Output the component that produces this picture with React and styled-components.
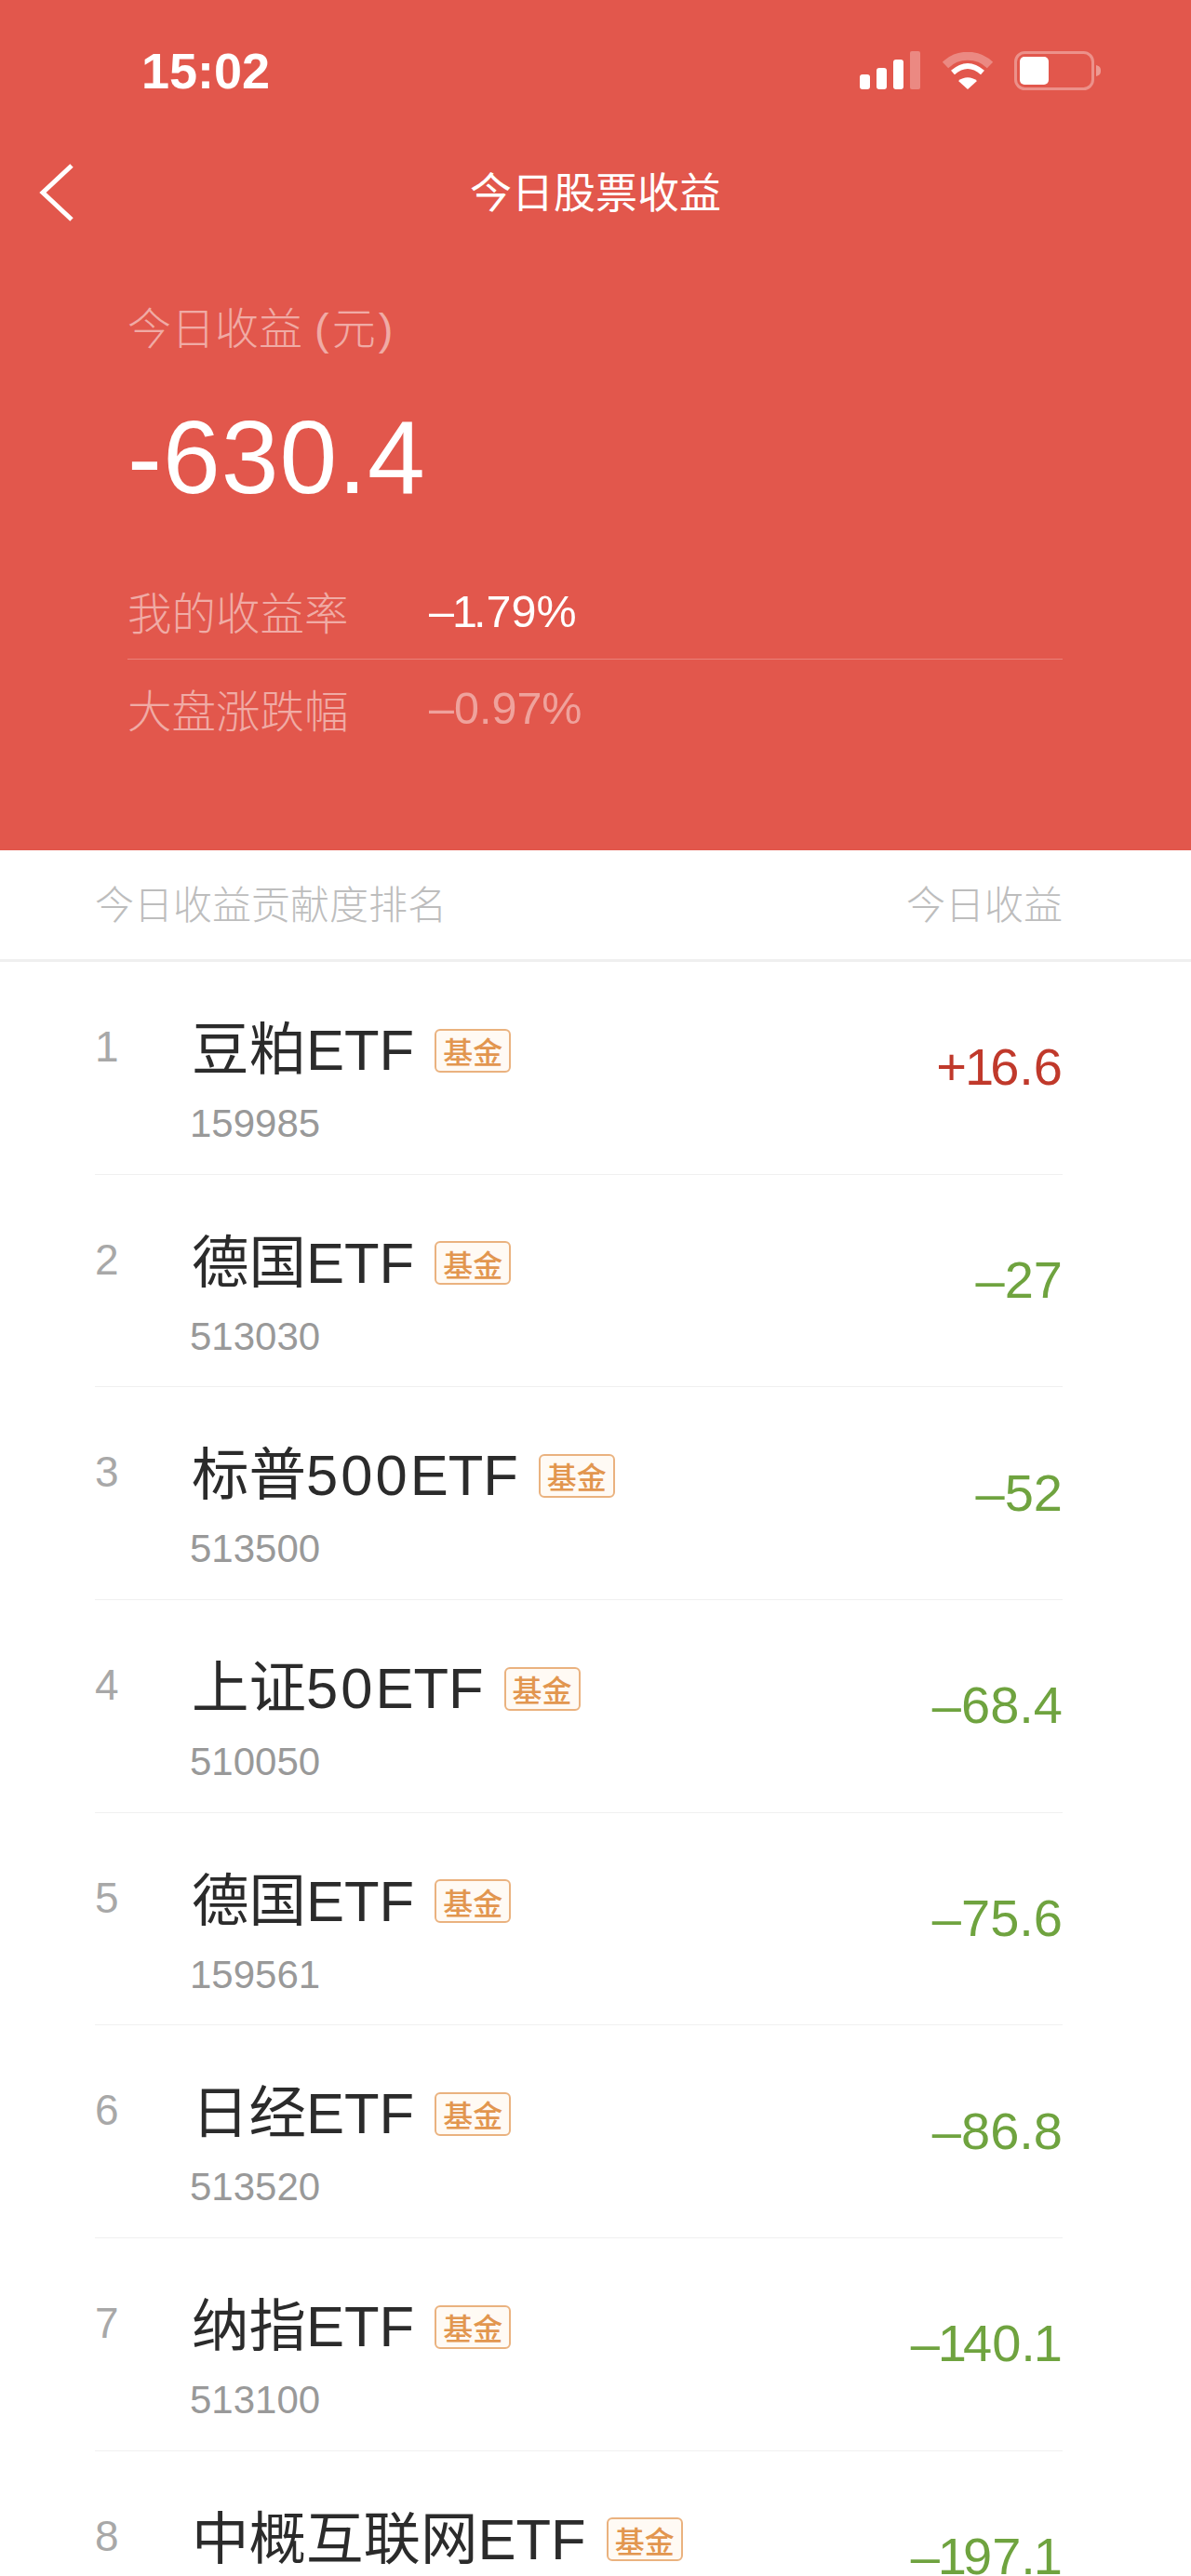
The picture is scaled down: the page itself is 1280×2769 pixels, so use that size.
import React from 'react';
import styled, { createGlobalStyle } from 'styled-components';

const stocks = [
  { rank: 1, name: '豆粕ETF', code: '159985', value: '+16.6', up: true },
  { rank: 2, name: '德国ETF', code: '513030', value: '–27' },
  { rank: 3, name: '标普500ETF', code: '513500', value: '–52' },
  { rank: 4, name: '上证50ETF', code: '510050', value: '–68.4' },
  { rank: 5, name: '德国ETF', code: '159561', value: '–75.6' },
  { rank: 6, name: '日经ETF', code: '513520', value: '–86.8' },
  { rank: 7, name: '纳指ETF', code: '513100', value: '–140.1' },
  { rank: 8, name: '中概互联网ETF', value: '–197.1' },
];

// the screenshot's font has a much narrower "1" than Liberation Sans
function figures(text) {
  const parts = text.split(/(1)/);
  return parts.map((part, i) =>
    part === '1' ? (
      <NarrowOne key={i} $tail={i === parts.length - 2 && parts[i + 1] === ''}>
        1
      </NarrowOne>
    ) : (
      part
    )
  );
}

function nameParts(name) {
  return name.split(/(\d+)/).map((part, i) => (/\d/.test(part) ? <NameDigits key={i}>{part}</NameDigits> : part));
}

function StatusIcons() {
  return (
    <StatusGroup>
      <svg width="66" height="42" viewBox="0 0 66 42" fill="#fff">
        <rect x="0" y="25" width="11" height="16" rx="3" />
        <rect x="18" y="18" width="11" height="23" rx="3" />
        <rect x="36" y="9" width="11" height="32" rx="3" />
        <rect x="54" y="0" width="11" height="41" rx="2" opacity="0.3" />
      </svg>
      <svg width="56" height="40" viewBox="0 0 56 40" fill="none" stroke="#fff">
        <path d="M4 14 C17 1 39 1 52 14" strokeWidth="9" opacity="0.3" />
        <path d="M12 22 Q28 8 44 22" strokeWidth="6" />
        <path d="M18 31 L28 40 L38 31 C32 26 24 26 18 31 Z" fill="#fff" stroke="none" />
      </svg>
      <svg width="94" height="42" viewBox="0 0 94 42">
        <rect x="1.5" y="1.5" width="83" height="39" rx="10" fill="none" stroke="#fff" strokeWidth="3" opacity="0.35" />
        <rect x="6" y="6" width="31" height="30" rx="5" fill="#fff" />
        <path d="M88 15 C92 16 93 18 93 21 C93 24 92 26 88 27 Z" fill="#fff" opacity="0.4" />
      </svg>
    </StatusGroup>
  );
}

function App() {
  return (
    <>
      <GlobalStyle />
      <Page>
        <Header>
          <StatusBar>
            <Clock>15:02</Clock>
            <StatusIcons />
          </StatusBar>
          <Nav>
            <BackIcon width="38" height="62" viewBox="0 0 38 62" fill="none" stroke="#fff" strokeWidth="5">
              <path d="M35 2 L4 31 L35 60" />
            </BackIcon>
            <NavTitle>今日股票收益</NavTitle>
          </Nav>
          <Summary>
            <SummaryLabel>今日收益 <Unit>(元)</Unit></SummaryLabel>
            <Amount>-630.4</Amount>
            <Stats>
              <StatRow $line>
                <StatName>我的收益率</StatName>
                <StatValue>{figures('–1.79%')}</StatValue>
              </StatRow>
              <StatRow>
                <StatName>大盘涨跌幅</StatName>
                <StatValue $dim>{figures('–0.97%')}</StatValue>
              </StatRow>
            </Stats>
          </Summary>
        </Header>
        <ListHead>
          <span>今日收益贡献度排名</span>
          <span>今日收益</span>
        </ListHead>
        <List>
          {stocks.map(stock => (
            <Row key={stock.rank}>
              <Rank>{stock.rank}</Rank>
              <Info>
                <NameLine>
                  <Name>{nameParts(stock.name)}</Name>
                  <Tag>基金</Tag>
                </NameLine>
                {stock.code && <Code>{stock.code}</Code>}
              </Info>
              <Value $up={stock.up}>{figures(stock.value)}</Value>
            </Row>
          ))}
        </List>
      </Page>
    </>
  );
}

const GlobalStyle = createGlobalStyle`
  html, body {
    margin: 0;
    padding: 0;
    background: #fff;
    font-family: "Liberation Sans", "Noto Sans CJK SC", sans-serif;
  }
`;

const Page = styled.div`
  width: 1280px;
  height: 2769px;
  overflow: hidden;
  background: #fff;
`;

const Header = styled.header`
  height: 914px;
  background: #e2574c;
  color: #fff;
`;

const StatusBar = styled.div`
  display: flex;
  justify-content: space-between;
  align-items: center;
  height: 152px;
  padding: 0 96px 0 152px;
`;

const Clock = styled.span`
  font-size: 54px;
  font-weight: 700;
`;

const StatusGroup = styled.div`
  display: flex;
  align-items: center;
  gap: 22px;
`;

const Nav = styled.nav`
  position: relative;
  display: flex;
  justify-content: center;
  align-items: center;
  height: 110px;
`;

const BackIcon = styled.svg`
  position: absolute;
  left: 42px;
  top: 24px;
`;

const NavTitle = styled.h1`
  margin: -6px 0 0;
  font-size: 45px;
  font-weight: 400;
`;

const Summary = styled.section`
  padding: 62px 138px 0 137px;
`;

const SummaryLabel = styled.div`
  font-size: 47px;
  line-height: 60px;
  font-weight: 300;
  color: rgba(255, 255, 255, 0.5);
`;

const Unit = styled.span`
  letter-spacing: 3px;
`;

const Amount = styled.div`
  margin-top: 48px;
  font-size: 111px;
  line-height: 120px;
  letter-spacing: 1px;
`;

const Stats = styled.div`
  margin-top: 53px;
`;

const StatRow = styled.div`
  display: flex;
  align-items: center;
  box-sizing: border-box;
  height: 104px;
  border-bottom: ${props => (props.$line ? '1px solid rgba(255, 255, 255, 0.25)' : 'none')};
`;

const StatName = styled.span`
  width: 324px;
  font-size: 47.5px;
  font-weight: 300;
  color: rgba(255, 255, 255, 0.5);
`;

const StatValue = styled.span`
  font-size: 48.5px;
  color: ${props => (props.$dim ? 'rgba(255, 255, 255, 0.45)' : '#fff')};
`;

const NarrowOne = styled.span`
  margin-left: -2px;
  letter-spacing: ${props => (props.$tail ? '0' : '-4px')};
`;

const ListHead = styled.div`
  display: flex;
  justify-content: space-between;
  align-items: center;
  box-sizing: border-box;
  height: 120px;
  padding: 0 138px 6px 102px;
  border-bottom: 3px solid #efefef;
  font-size: 42px;
  font-weight: 300;
  color: #bdbdbd;
`;

const List = styled.div`
  margin: 0 138px 0 102px;
`;

const Row = styled.div`
  display: flex;
  align-items: center;
  box-sizing: border-box;
  height: 228.7px;
  border-bottom: 1px solid #f0f0f0;
`;

const Rank = styled.div`
  align-self: flex-start;
  width: 104px;
  margin-top: 61px;
  font-size: 46px;
  line-height: 60px;
  color: #a8a8a8;
`;

const Info = styled.div`
  flex: 1;
  align-self: flex-start;
  padding-top: 59px;
`;

const NameLine = styled.div`
  display: flex;
  align-items: center;
  gap: 22px;
  height: 72px;
`;

const Name = styled.span`
  font-size: 61.5px;
  line-height: 72px;
  color: #2b2b2b;
`;

const NameDigits = styled.span`
  letter-spacing: 3px;
`;

const Tag = styled.span`
  display: flex;
  justify-content: center;
  align-items: center;
  box-sizing: border-box;
  width: 82px;
  height: 47px;
  border: 2px solid #eab27f;
  border-radius: 6px;
  background: #fffaf4;
  font-size: 32px;
  font-weight: 500;
  color: #e2964f;
`;

const Code = styled.div`
  margin-top: 18px;
  margin-left: -2px;
  font-size: 42px;
  line-height: 50px;
  color: #999;
`;

const Value = styled.div`
  margin-bottom: 2px;
  font-size: 56px;
  color: ${props => (props.$up ? '#c0392b' : '#6fa33f')};
`;

export default App;
